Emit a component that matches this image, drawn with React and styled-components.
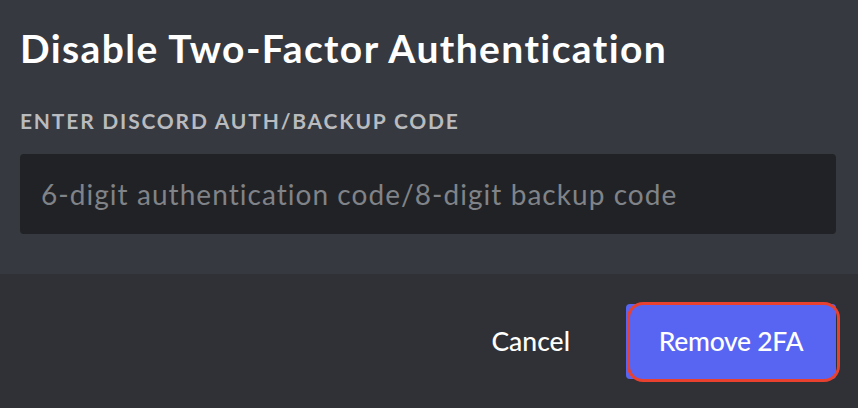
import React from "react";
import styled, { createGlobalStyle } from "styled-components";

const Global = createGlobalStyle`
  html, body { margin: 0; padding: 0; background: #36393f; }
  body { font-family: Lato, "Open Sans", sans-serif; }
  * { box-sizing: border-box; }
`;

const Modal = styled.div`
  width: 858px;
  height: 408px;
  display: flex;
  flex-direction: column;
  background: #36393f;
`;

const Body = styled.div`
  height: 274px;
  padding: 23px 22px 0 20px;
  display: flex;
  flex-direction: column;
`;

const Title = styled.h1`
  margin: 0;
  font-family: Lato, sans-serif;
  font-weight: 700;
  font-size: 39px;
  line-height: 50px;
  letter-spacing: 1.4px;
  color: #ffffff;
  white-space: nowrap;
`;

const Label = styled.label`
  margin-top: 35px;
  font-family: Lato, sans-serif;
  font-weight: 700;
  font-size: 21px;
  line-height: 26px;
  letter-spacing: 1.8px;
  color: #b9bbbe;
  text-transform: uppercase;
  white-space: nowrap;
`;

const Input = styled.input`
  margin-top: 20px;
  width: 816px;
  height: 80px;
  border: none;
  border-radius: 4px;
  background: #202225;
  padding: 0 21px;
  font-family: Lato, sans-serif;
  font-size: 28px;
  letter-spacing: 1.05px;
  color: #dcddde;
  outline: none;
  &::placeholder { color: #808388; }
`;

const Footer = styled.div`
  flex: 1;
  background: #2f3136;
  display: flex;
  align-items: center;
  justify-content: flex-end;
  padding: 0 22px 0 0;
  gap: 56px;
`;

const Button = styled.button`
  position: relative;
  border: none;
  font-family: Lato, sans-serif;
  font-weight: 500;
  font-size: 26.5px;
  letter-spacing: ${(p) => (p.$primary ? "-0.3px" : "0")};
  color: #ffffff;
  cursor: pointer;
  background: ${(p) => (p.$primary ? "#5865f2" : "transparent")};
  width: ${(p) => (p.$primary ? "210px" : "auto")};
  height: 75px;
  border-radius: 4px;
  padding: 0;
`;

const Highlight = styled.span`
  position: absolute;
  left: 1px;
  right: -4px;
  top: -2px;
  bottom: -3px;
  border: 3px solid #e8412f;
  border-radius: 16px;
  pointer-events: none;
`;

export default function App() {
  return (
    <>
      <Global />
      <Modal>
        <Body>
          <Title>Disable Two-Factor Authentication</Title>
          <Label>Enter Discord Auth/Backup Code</Label>
          <Input placeholder="6-digit authentication code/8-digit backup code" />
        </Body>
        <Footer>
          <Button>Cancel</Button>
          <Button $primary>
            Remove 2FA
            <Highlight />
          </Button>
        </Footer>
      </Modal>
    </>
  );
}
